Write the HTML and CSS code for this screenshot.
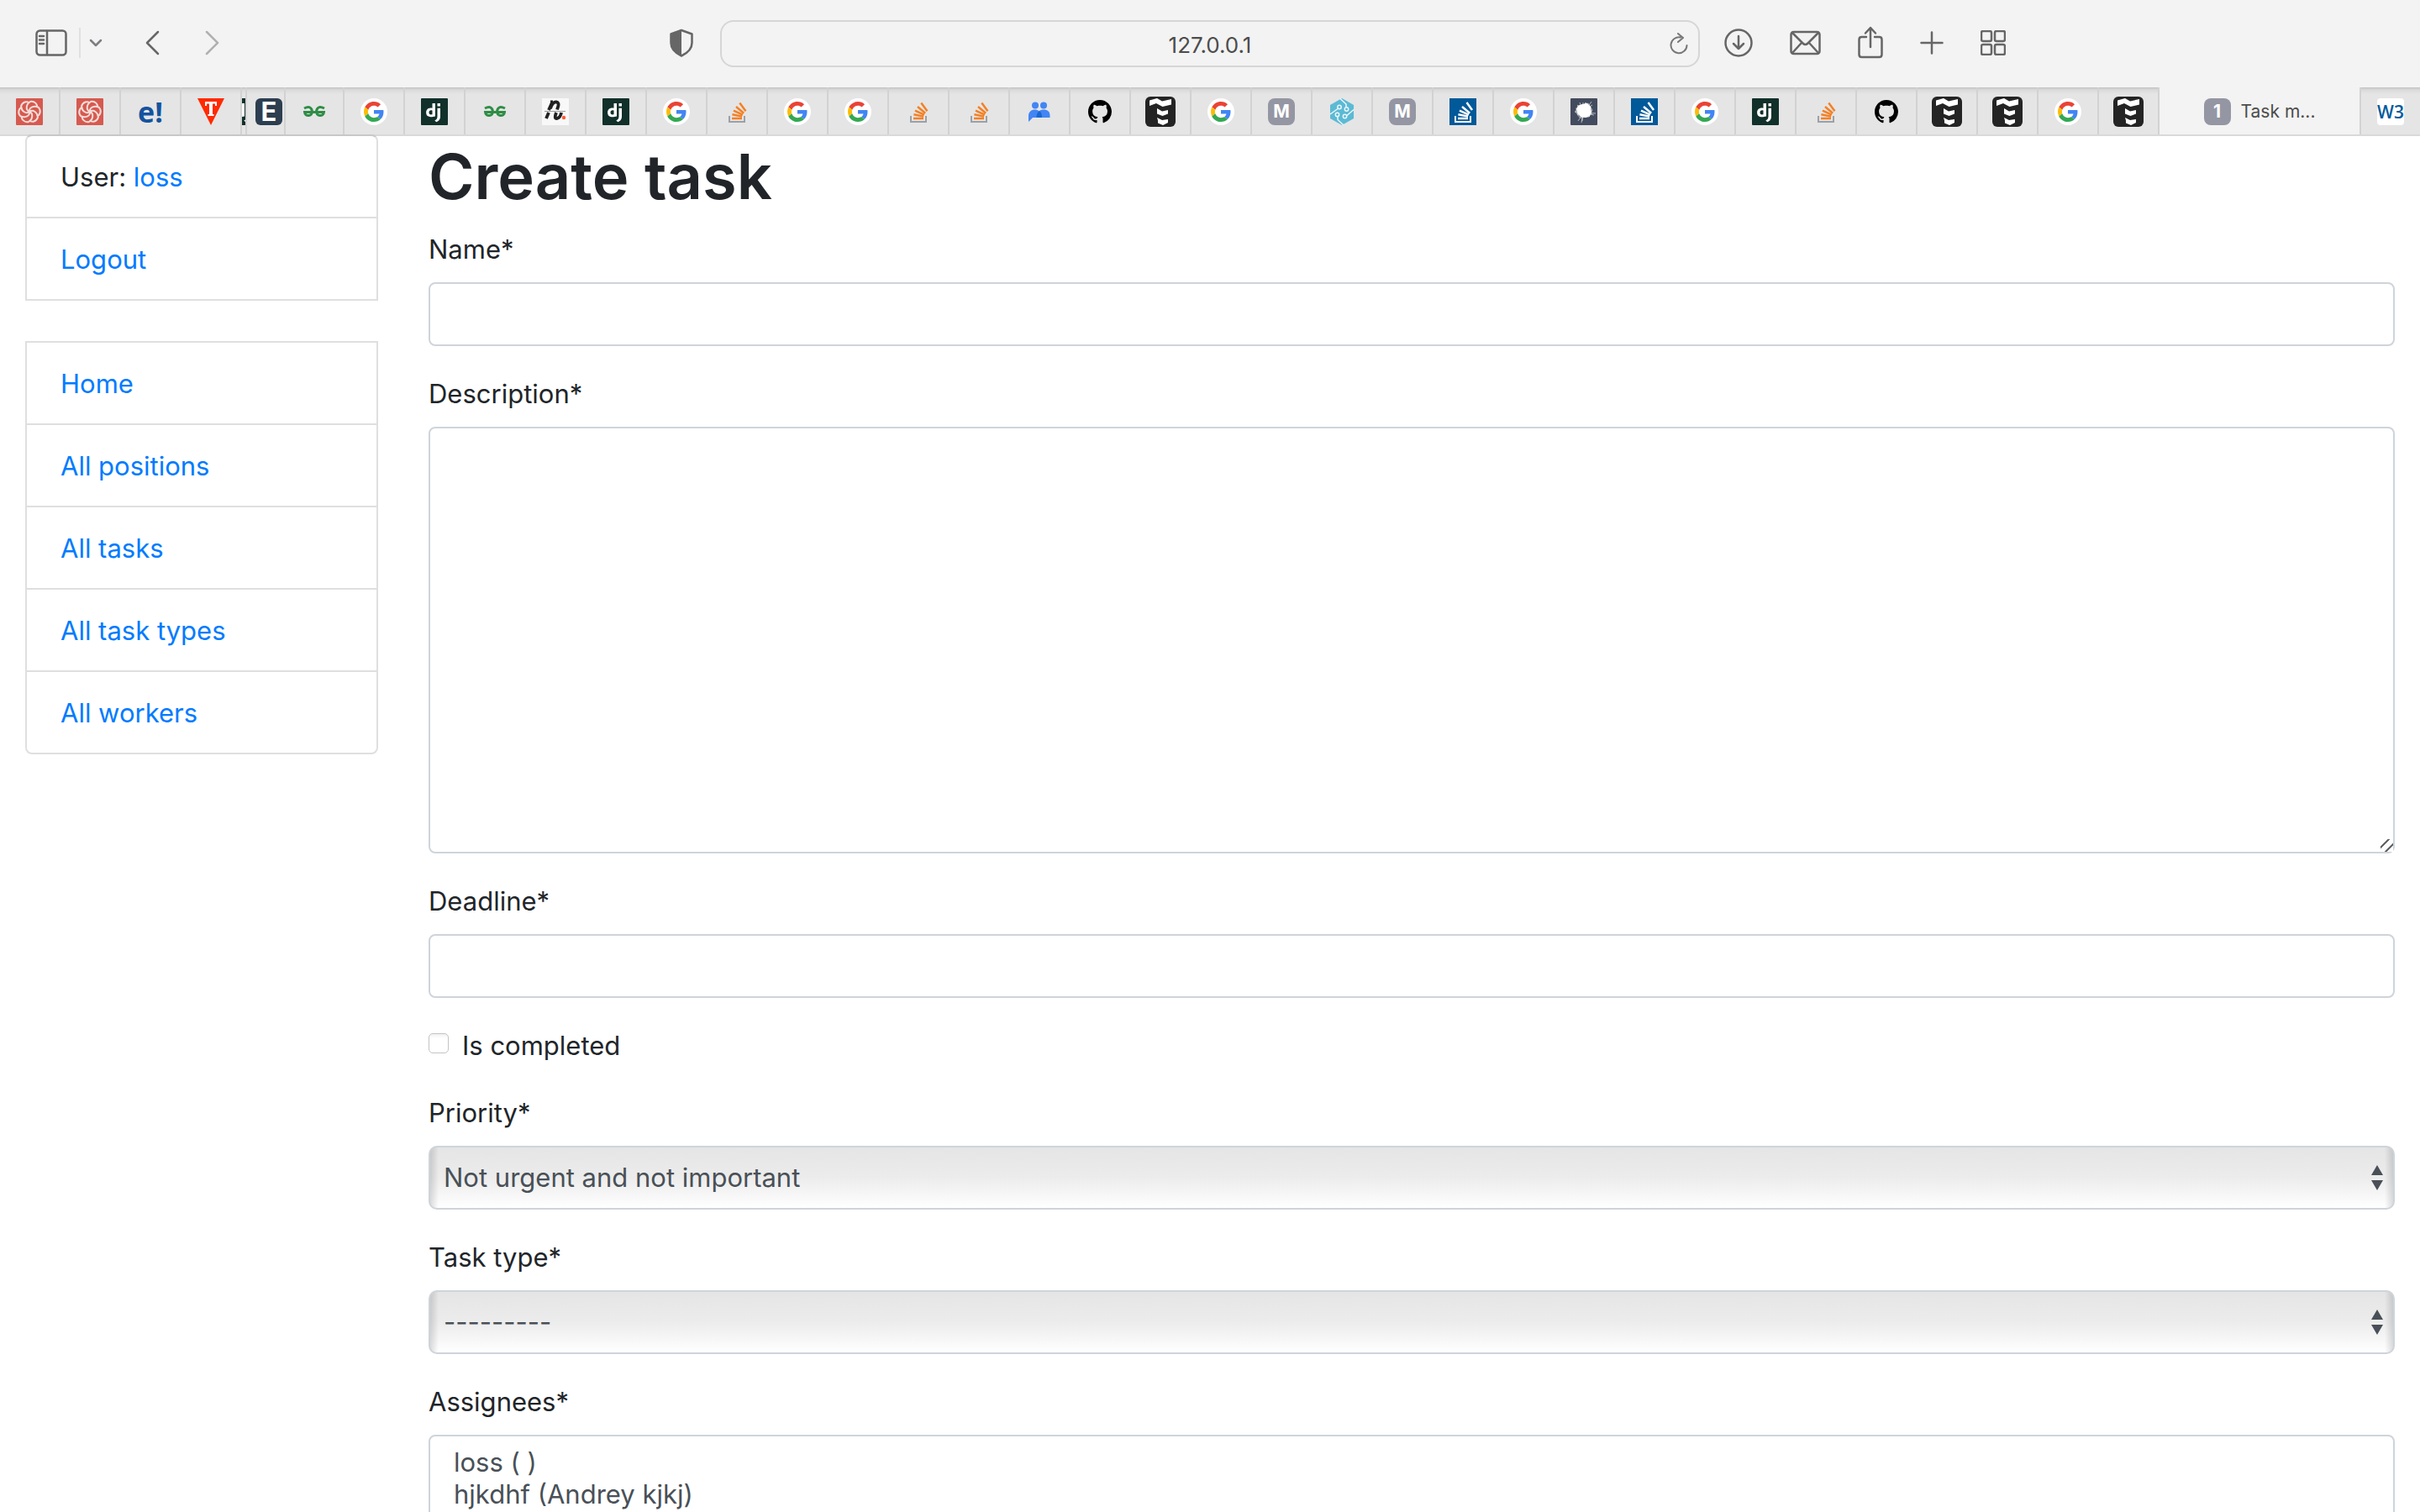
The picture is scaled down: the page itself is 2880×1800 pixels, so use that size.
FILE: index.html
```html
<!DOCTYPE html>
<html lang="en">
<head>
<meta charset="utf-8">
<title>Task manager</title>
<link rel="stylesheet" href="styles.css">
</head>
<body>
<svg class="sprite" aria-hidden="true">
  <symbol id="google" viewBox="0 0 32 32">
    <circle cx="16" cy="16" r="16" fill="#fff"/>
    <g transform="translate(4 4) scale(.5)">
      <path fill="#EA4335" d="M24 9.500c3.540 0 6.710 1.220 9.210 3.600l6.850-6.850C35.900 2.380 30.470 0 24 0 14.620 0 6.510 5.380 2.560 13.220l7.980 6.190C12.430 13.720 17.740 9.500 24 9.500z"/>
      <path fill="#4285F4" d="M46.980 24.550c0-1.570-.15-3.090-.38-4.550H24v9.020h12.940c-.58 2.960-2.260 5.480-4.780 7.180l7.730 6c4.510-4.180 7.090-10.360 7.090-17.650z"/>
      <path fill="#FBBC05" d="M10.530 28.590c-.48-1.450-.76-2.990-.76-4.590s.27-3.140.76-4.590l-7.980-6.190C.92 16.460 0 20.120 0 24s.92 7.540 2.560 10.780l7.970-6.190z"/>
      <path fill="#34A853" d="M24 48c6.480 0 11.930-2.130 15.890-5.810l-7.730-6c-2.150 1.450-4.920 2.300-8.160 2.300-6.260 0-11.570-4.220-13.470-9.910l-7.980 6.190C6.510 42.620 14.620 48 24 48z"/>
    </g>
  </symbol>
  <symbol id="django" viewBox="0 0 32 32">
    <rect width="32" height="32" rx="1" fill="#11302a"/>
    <path fill="#fff" fill-rule="evenodd" d="M13.500 6H17v15.500c-2 .5-3.400.7-5 .7-3.800 0-5.900-2-5.900-5.300 0-3.200 2.200-5.400 5.500-5.400.7 0 1.300.1 1.900.2zm0 8.500c-.5-.2-1-.3-1.500-.3-1.600 0-2.500 1-2.500 2.700 0 1.600.9 2.500 2.400 2.500.5 0 1 0 1.600-.1z"/>
    <path fill="#fff" d="M19.500 11.700H23v9.600c0 3.800-1.300 5.500-4.700 7l-2-1.700c2.500-1.300 3.200-2.400 3.200-5.300zM19.500 6H23v3.500h-3.500z"/>
  </symbol>
  <symbol id="stack" viewBox="0 0 32 32">
    <path fill="none" stroke="#9ba1a7" stroke-width="2" d="M7 21v7h18v-7"/>
    <g stroke="#f48024" stroke-width="2.500">
      <path d="M10 24h12M10.400 19.200l11.700 2.400M12 14.600l10.900 5M15 10l9.200 7.700M19.300 5.600l7.200 9.600"/>
    </g>
  </symbol>
  <symbol id="stack-blue" viewBox="0 0 32 32">
    <rect width="32" height="32" fill="#005999"/>
    <path fill="none" stroke="#fff" stroke-width="2" d="M7 21v7h18v-7"/>
    <g stroke="#fff" stroke-width="2.500">
      <path d="M10 24h12M10.400 19.200l11.700 2.400M12 14.600l10.900 5M15 10l9.200 7.700M20.500 5l6.500 9"/>
    </g>
  </symbol>
  <symbol id="github" viewBox="0 0 32 32">
    <path transform="translate(2 2) scale(1.750)" d="M8 0C3.580 0 0 3.580 0 8c0 3.540 2.290 6.530 5.470 7.590.4.070.55-.17.55-.38 0-.19-.01-.82-.01-1.490-2.010.37-2.530-.49-2.690-.94-.09-.23-.48-.94-.82-1.130-.28-.15-.68-.52-.01-.53.63-.01 1.080.58 1.230.82.72 1.210 1.870.87 2.330.66.07-.52.28-.87.51-1.070-1.780-.2-3.640-.89-3.640-3.950 0-.87.31-1.590.82-2.150-.08-.2-.36-1.020.08-2.120 0 0 .67-.21 2.200.82.640-.18 1.320-.27 2-.27s1.360.09 2 .27c1.530-1.040 2.200-.82 2.200-.82.440 1.100.16 1.920.08 2.120.51.560.82 1.270.82 2.150 0 3.070-1.870 3.750-3.650 3.950.29.25.54.73.54 1.480 0 1.070-.01 1.930-.01 2.200 0 .21.15.46.55.38A8.010 8.010 0 0 0 16 8c0-4.420-3.580-8-8-8z"/>
  </symbol>
  <symbol id="mate" viewBox="0 0 36 36">
    <rect width="36" height="36" rx="6" fill="#242424"/>
    <path fill="#fff" d="M5 4.500L14 2l6 3.500L31 3v6.500L20.500 12 13 8l-8 3zM14 14l6 3.500 7-1.500v4.500L20.500 23 14 20.500zM14 25l6 3 7-1v4l-6 3-6-2.500v-3z"/>
  </symbol>
  <symbol id="gfg" viewBox="0 0 32 32">
    <g fill="none" stroke="#2f8d46" stroke-width="3">
      <path d="M4 12q7.500-4 9.300 2.500c1.500 7.500-8.500 8-8.800 2H27.500c-.3 6-10.300 5.500-8.800-2Q20.500 8 28 12"/>
    </g>
  </symbol>
  <symbol id="knot" viewBox="0 0 32 32">
    <rect width="32" height="32" rx="1" fill="#d65a50"/>
    <g fill="none" stroke="#f4ddd8" stroke-width="2">
      <path d="M16 16c-5-2-4-9 1-12 5-1 9 3 8 7"/>
      <path transform="rotate(60 16 16)" d="M16 16c-5-2-4-9 1-12 5-1 9 3 8 7"/>
      <path transform="rotate(120 16 16)" d="M16 16c-5-2-4-9 1-12 5-1 9 3 8 7"/>
      <path transform="rotate(180 16 16)" d="M16 16c-5-2-4-9 1-12 5-1 9 3 8 7"/>
      <path transform="rotate(240 16 16)" d="M16 16c-5-2-4-9 1-12 5-1 9 3 8 7"/>
      <path transform="rotate(300 16 16)" d="M16 16c-5-2-4-9 1-12 5-1 9 3 8 7"/>
    </g>
  </symbol>
  <symbol id="torn" viewBox="0 0 32 32">
    <path fill="#ff2a00" d="M0 0h32L16 32z"/>
    <path fill="#fff" d="M9 4h14v5h-2V6.500h-3V19h1.500v2h-7v-2H14V6.500h-3V9H9z"/>
  </symbol>
  <symbol id="people" viewBox="0 0 32 32">
    <g fill="#4285f4">
      <circle cx="11" cy="8.500" r="4"/><circle cx="21" cy="8.500" r="4"/>
      <path d="M3 28v-7c0-5 3.500-7.500 7.500-7.500s7 2.500 7 7V23H8z"/>
      <path d="M13.500 23v-2.500c0-4.500 3-7 7.500-7s7.500 2.500 7.500 7V23z"/>
    </g>
    <path fill="#1967d2" d="M12.500 23c0-4 1-6 3.500-8 2.500 2 3 4.500 3 8z"/>
  </symbol>
  <symbol id="hex" viewBox="0 0 32 32">
    <path fill="#5bbad5" d="M16 0l14 8v16l-14 8-14-8V8z"/>
    <g fill="none" stroke="#eef6f8" stroke-width="1.500">
      <circle cx="13" cy="10.500" r="2.200"/><circle cx="21.500" cy="13" r="2.200"/><circle cx="10.500" cy="19.500" r="2.200"/><circle cx="19.500" cy="21.500" r="2.200"/>
      <path d="M11 12.500L2 19M21 10.500V7l-7-6.500M11 22v3.500l7 6.500M22 20.500l8-7"/>
    </g>
  </symbol>
  <symbol id="splat" viewBox="0 0 32 32">
    <rect width="32" height="32" rx="1" fill="#434b5e"/>
    <path fill="#fff" d="M9 9l5-2 6-1 4 4 1 6-2 5-5 2-6-1-4-4-1-5z"/>
    <path fill="none" stroke="#fff" stroke-width="1" opacity=".6" d="M5 16l25 2M8 8l15 14M9 27L25 4M6 12l20 7M11 5l6 17M13 29l5-24M14 27l1-22M8 20l18-12M18 5l5 14 5 1M9 9l12-3 5 8-4 8-11 1-5-7z"/>
  </symbol>
</svg>

<header class="browser">
  <div class="toolbar">
    <div class="tools tools-left">
      <div class="sidebar-tools">
        <button class="tool" type="button" aria-label="Show sidebar">
          <svg width="38" height="32" viewBox="0 0 38 32" class="line"><rect x="1.500" y="1.500" width="35" height="29" rx="4"/><path d="M14 2v28M5 8h5M5 12.500h5M5 17h5"/></svg>
        </button>
        <span class="divider"></span>
        <button class="tool" type="button" aria-label="Tab groups">
          <svg width="16" height="12" viewBox="0 0 16 12" class="line soft"><path d="M2 3l6 6 6-6"/></svg>
        </button>
      </div>
      <button class="tool" type="button" aria-label="Back">
        <svg width="22" height="30" viewBox="0 0 22 30" class="line"><path d="M16 2L3 15l13 13"/></svg>
      </button>
      <button class="tool" type="button" aria-label="Forward" disabled>
        <svg width="22" height="30" viewBox="0 0 22 30" class="line faint"><path d="M2 2l13 13L2 28"/></svg>
      </button>
      <button class="tool shield" type="button" aria-label="Privacy report">
        <svg width="28" height="34" viewBox="0 0 28 34"><path fill="none" stroke="#666" stroke-width="2.500" stroke-linejoin="round" d="M14 2l12.500 4.500V17c0 7-5 12-12.500 15.500C6.500 29 1.500 24 1.500 17V6.500z"/><path fill="#666" d="M14 1v32C6 29.500 1 24 1 17V6z"/></svg>
      </button>
    </div>
    <div class="address">
      <input class="address-input" type="text" aria-label="Address" value="127.0.0.1">
      <button class="tool" type="button" aria-label="Reload">
        <svg width="22" height="26" viewBox="0 0 22 26" class="line thin"><path d="M13 5.500A9.500 9.500 0 1 0 20.500 15M10 1l6 5-6 5"/></svg>
      </button>
    </div>
    <div class="tools tools-right">
      <button class="tool" type="button" aria-label="Downloads">
        <svg width="34" height="34" viewBox="0 0 34 34" class="line"><circle cx="17" cy="17" r="15.500"/><path d="M17 9v15M11 18l6 6 6-6"/></svg>
      </button>
      <button class="tool" type="button" aria-label="Mail">
        <svg width="37" height="30" viewBox="0 0 37 30" class="line"><rect x="1.500" y="2" width="34" height="26" rx="3"/><path d="M3 3l12.500 12.500q3 3 6 0L34 3M3 27l11-12M34 27L23 15"/></svg>
      </button>
      <button class="tool" type="button" aria-label="Share">
        <svg width="30" height="40" viewBox="0 0 30 40" class="line"><path d="M10 13H4.500q-3 0-3 3v18q0 3 3 3h21q3 0 3-3V16q0-3-3-3H20M15 25V3M9 8.500L15 2l6 6.500"/></svg>
      </button>
      <button class="tool" type="button" aria-label="New tab">
        <svg width="28" height="28" viewBox="0 0 28 28" class="line"><path d="M14 1.500v25M1.500 14h25"/></svg>
      </button>
      <button class="tool" type="button" aria-label="Tab overview">
        <svg width="30" height="30" viewBox="0 0 30 30" class="line"><rect x="1" y="1" width="12" height="12" rx="2"/><rect x="17" y="1" width="12" height="12" rx="2"/><rect x="1" y="17" width="12" height="12" rx="2"/><rect x="17" y="17" width="12" height="12" rx="2"/></svg>
      </button>
    </div>
  </div>
  <nav class="tabs" aria-label="Tabs">
    <a class="tab" href="#"><svg class="favicon"><use href="#knot"/></svg></a>
    <a class="tab" href="#"><svg class="favicon"><use href="#knot"/></svg></a>
    <a class="tab" href="#"><span class="letter letter-e">e!</span></a>
    <a class="tab" href="#"><svg class="favicon"><use href="#torn"/></svg></a>
    <a class="tab tab-sliver" href="#"><svg class="favicon"><use href="#django"/></svg></a>
    <a class="tab tab-short" href="#"><span class="letter letter-navy">E</span></a>
    <a class="tab tab-after" href="#"><svg class="favicon"><use href="#gfg"/></svg></a>
    <a class="tab" href="#"><svg class="favicon"><use href="#google"/></svg></a>
    <a class="tab" href="#"><svg class="favicon"><use href="#django"/></svg></a>
    <a class="tab" href="#"><svg class="favicon"><use href="#gfg"/></svg></a>
    <a class="tab" href="#"><svg class="favicon" viewBox="0 0 32 32"><rect width="32" height="32" fill="#f8f8f8"/><path fill="none" stroke="#222" stroke-width="3.800" d="M10 4.500h3M12.500 4L8 14M5 24l3-7M10 12q3-8 7-7.500 4 .5 2 6l-1 3M17 17q-3 8 1 7 4-1 5-7"/><path stroke="#999" stroke-width="1" d="M3 15.500h25"/><circle cx="26" cy="23" r="2.200" fill="#ff5a36"/></svg></a>
    <a class="tab" href="#"><svg class="favicon"><use href="#django"/></svg></a>
    <a class="tab" href="#"><svg class="favicon"><use href="#google"/></svg></a>
    <a class="tab" href="#"><svg class="favicon"><use href="#stack"/></svg></a>
    <a class="tab" href="#"><svg class="favicon"><use href="#google"/></svg></a>
    <a class="tab" href="#"><svg class="favicon"><use href="#google"/></svg></a>
    <a class="tab" href="#"><svg class="favicon"><use href="#stack"/></svg></a>
    <a class="tab" href="#"><svg class="favicon"><use href="#stack"/></svg></a>
    <a class="tab" href="#"><svg class="favicon"><use href="#people"/></svg></a>
    <a class="tab" href="#"><svg class="favicon"><use href="#github"/></svg></a>
    <a class="tab" href="#"><svg class="favicon large"><use href="#mate"/></svg></a>
    <a class="tab" href="#"><svg class="favicon"><use href="#google"/></svg></a>
    <a class="tab" href="#"><span class="letter letter-gray">M</span></a>
    <a class="tab" href="#"><svg class="favicon"><use href="#hex"/></svg></a>
    <a class="tab" href="#"><span class="letter letter-gray">M</span></a>
    <a class="tab" href="#"><svg class="favicon"><use href="#stack-blue"/></svg></a>
    <a class="tab" href="#"><svg class="favicon"><use href="#google"/></svg></a>
    <a class="tab" href="#"><svg class="favicon"><use href="#splat"/></svg></a>
    <a class="tab" href="#"><svg class="favicon"><use href="#stack-blue"/></svg></a>
    <a class="tab" href="#"><svg class="favicon"><use href="#google"/></svg></a>
    <a class="tab" href="#"><svg class="favicon"><use href="#django"/></svg></a>
    <a class="tab" href="#"><svg class="favicon"><use href="#stack"/></svg></a>
    <a class="tab" href="#"><svg class="favicon"><use href="#github"/></svg></a>
    <a class="tab" href="#"><svg class="favicon large"><use href="#mate"/></svg></a>
    <a class="tab" href="#"><svg class="favicon large"><use href="#mate"/></svg></a>
    <a class="tab" href="#"><svg class="favicon"><use href="#google"/></svg></a>
    <a class="tab" href="#"><svg class="favicon large"><use href="#mate"/></svg></a>
    <a class="tab tab-active" href="#" aria-current="page"><span class="letter letter-gray">1</span><span>Task m...</span></a>
    <a class="tab tab-last" href="#"><span class="letter letter-w3">W3</span></a>
  </nav>
</header>

<div class="page">
  <aside class="sidebar">
    <ul class="menu menu-user">
      <li class="menu-item">User: <a href="#">loss</a></li>
      <li class="menu-item"><a href="#">Logout</a></li>
    </ul>
    <ul class="menu menu-nav">
      <li class="menu-item"><a href="#">Home</a></li>
      <li class="menu-item"><a href="#">All positions</a></li>
      <li class="menu-item"><a href="#">All tasks</a></li>
      <li class="menu-item"><a href="#">All task types</a></li>
      <li class="menu-item"><a href="#">All workers</a></li>
    </ul>
  </aside>
  <main class="content">
    <h1 class="title">Create task</h1>
    <form class="form">
      <div class="field">
        <label for="name">Name*</label>
        <input class="control" id="name" type="text">
      </div>
      <div class="field">
        <label for="description">Description*</label>
        <textarea class="control control-area" id="description" rows="10"></textarea>
      </div>
      <div class="field">
        <label for="deadline">Deadline*</label>
        <input class="control" id="deadline" type="text">
      </div>
      <div class="check">
        <input class="check-box" id="completed" type="checkbox">
        <label for="completed">Is completed</label>
      </div>
      <div class="field">
        <label for="priority">Priority*</label>
        <div class="select">
          <select class="control control-select" id="priority"><option>Not urgent and not important</option></select>
          <svg class="arrows" width="14" height="30" viewBox="0 0 14 30"><path fill="#495057" d="M7 0l7 12H0zM0 18h14L7 30z"/></svg>
        </div>
      </div>
      <div class="field">
        <label for="type">Task type*</label>
        <div class="select">
          <select class="control control-select" id="type"><option>---------</option></select>
          <svg class="arrows" width="14" height="30" viewBox="0 0 14 30"><path fill="#495057" d="M7 0l7 12H0zM0 18h14L7 30z"/></svg>
        </div>
      </div>
      <div class="field">
        <label for="assignees">Assignees*</label>
        <select class="control control-list" id="assignees" multiple size="4">
          <option>loss ( )</option>
          <option>hjkdhf (Andrey kjkj)</option>
        </select>
      </div>
    </form>
  </main>
</div>
</body>
</html>
```
FILE: styles.css
```css
* {
  box-sizing: border-box;
}

body {
  display: flex;
  flex-direction: column;
  height: 100vh;
  margin: 0;
  background: #fff;
  color: #212529;
  font-family: Inter, "Liberation Sans", sans-serif;
  font-size: 31px;
  line-height: 48px;
}

a {
  color: #007bff;
  text-decoration: none;
}

.sprite {
  display: none;
}

/* Browser toolbar */

.browser {
  flex: none;
  background: #f3f3f3;
  box-shadow: 0 2px 0 #d9d9d9;
}

.toolbar {
  display: grid;
  grid-template-columns: minmax(0, 1fr) minmax(0, 1166px) minmax(0, 1fr);
  align-items: center;
  height: 104px;
}

.tools {
  display: flex;
  align-items: center;
  padding-bottom: 2px;
}

.tools-left {
  gap: 50px;
  padding-left: 42px;
  padding-right: 32px;
}

.tools-right {
  gap: 44px;
  padding-left: 29px;
}

.sidebar-tools {
  display: flex;
  align-items: center;
  gap: 10px;
}

.divider {
  width: 2px;
  height: 36px;
  margin-left: 4px;
  background: #e0e0e0;
}

.tool {
  display: flex;
  padding: 0;
  border: 0;
  background: none;
}

.shield {
  margin-left: auto;
}

.line {
  fill: none;
  stroke: #666;
  stroke-width: 2.5;
  stroke-linecap: round;
  stroke-linejoin: round;
}

.line.soft {
  stroke: #7d7d82;
}

.line.faint {
  stroke: #b0b0b0;
}

.line.thin {
  stroke: #777;
  stroke-width: 2;
}

.address {
  display: flex;
  align-items: center;
  height: 56px;
  padding: 0 12px 0 34px;
  border: 2px solid #d6d6d6;
  border-radius: 16px;
}

.address-input {
  flex: 1;
  min-width: 0;
  padding: 2px 0 0;
  border: 0;
  background: none;
  color: #4c4c4c;
  font: 26px Inter, "Liberation Sans", sans-serif;
  text-align: center;
}

/* Tab bar */

.tabs {
  display: flex;
  height: 56px;
}

.tab {
  flex: 0 0 72px;
  display: flex;
  align-items: center;
  justify-content: center;
  padding-top: 2px;
  border-right: 2px solid #d2d2d2;
  background: linear-gradient(#c2c2c2, #dadada 3px, #e5e5e5 8px);
  color: #4c4c4c;
  font-size: 21px;
  overflow: hidden;
}

.tab-sliver {
  flex-basis: 6px;
}

.tab-short {
  flex-basis: 46px;
  justify-content: flex-end;
  padding-right: 2px;
}

.tab-after {
  flex-basis: 70px;
}

.tab-active {
  flex: 1 1 auto;
  gap: 12px;
  min-width: 0;
  background: none;
}

.tab-last {
  flex-basis: 70px;
  border-right: 0;
}

.favicon {
  flex: none;
  width: 32px;
  height: 32px;
}

.favicon.large {
  width: 36px;
  height: 36px;
}

.letter {
  display: flex;
  align-items: center;
  justify-content: center;
  width: 32px;
  height: 32px;
  color: #fff;
  font-size: 21px;
  font-weight: 700;
}

.letter-e {
  color: #14539f;
  font-family: "Open Sans", sans-serif;
  font-size: 34px;
}

.letter-navy {
  border-radius: 6px;
  background: #2c3e50;
  font-size: 31px;
}

.letter-gray {
  border-radius: 8px;
  background: #9496a3;
}

.letter-w3 {
  border-radius: 4px;
  background: #fff;
  color: #005a9c;
  font-family: "Liberation Sans Narrow", "Open Sans", sans-serif;
  font-weight: 600;
}

/* Page */

.page {
  flex: 1;
  display: flex;
  gap: 60px;
  min-height: 0;
  padding: 0 30px;
  overflow-y: auto;
  scrollbar-width: none;
}

.sidebar {
  flex: 0 0 420px;
}

.menu {
  margin: 0 0 48px;
  padding: 0;
  border: 2px solid #dfdfdf;
  background: #fff;
  list-style: none;
}

.menu-user {
  border-top-color: #c8c8c8;
  border-radius: 8px 8px 0 0;
}

.menu-nav {
  border-radius: 0 0 8px 8px;
}

.menu-item {
  padding: 25px 40px 23px;
}

.menu-item + .menu-item {
  border-top: 2px solid #dfdfdf;
}

.content {
  flex: 1;
  min-width: 0;
}

.title {
  margin: 0;
  padding: 2px 0 14px;
  font-size: 74px;
  font-weight: 600;
  line-height: 96px;
}

.form {
  display: flex;
  flex-direction: column;
  gap: 32px;
}

.form label {
  padding-top: 1px;
  line-height: 47px;
}

.field {
  display: flex;
  flex-direction: column;
  gap: 16px;
}

.control {
  display: block;
  width: 100%;
  height: 76px;
  margin: 0;
  padding: 12px 24px;
  border: 2px solid #ced4da;
  border-radius: 8px;
  background: #fff;
  color: #495057;
  font: inherit;
}

.control-area {
  height: auto;
}

.control-area::-webkit-resizer {
  background: repeating-linear-gradient(135deg, #fff 0 6px, #666 6px 8px);
}

.select {
  display: grid;
  align-items: center;
}

.select > * {
  grid-area: 1 / 1;
}

.control-select {
  padding: 12px 48px 12px 16px;
  border-radius: 10px;
  appearance: none;
  background:
    linear-gradient(to right, #0002, #0000) left / 10px 100% no-repeat,
    linear-gradient(to left, #0002, #0000) right / 10px 100% no-repeat,
    linear-gradient(#e5e5e5, #ececec 50%, #fff);
}

.arrows {
  justify-self: end;
  margin-right: 14px;
  pointer-events: none;
}

.control-list {
  height: 178px;
}

.control-list option {
  min-height: 38px;
  padding: 0 4px;
  line-height: 38px;
}

.check {
  display: flex;
  align-items: center;
  gap: 16px;
}

.check-box {
  appearance: none;
  width: 24px;
  height: 24px;
  margin: 0 0 4px;
  border: 1px solid #c4c4c4;
  border-radius: 5px;
  background: linear-gradient(#f0f0f0, #fff 5px);
}
```
